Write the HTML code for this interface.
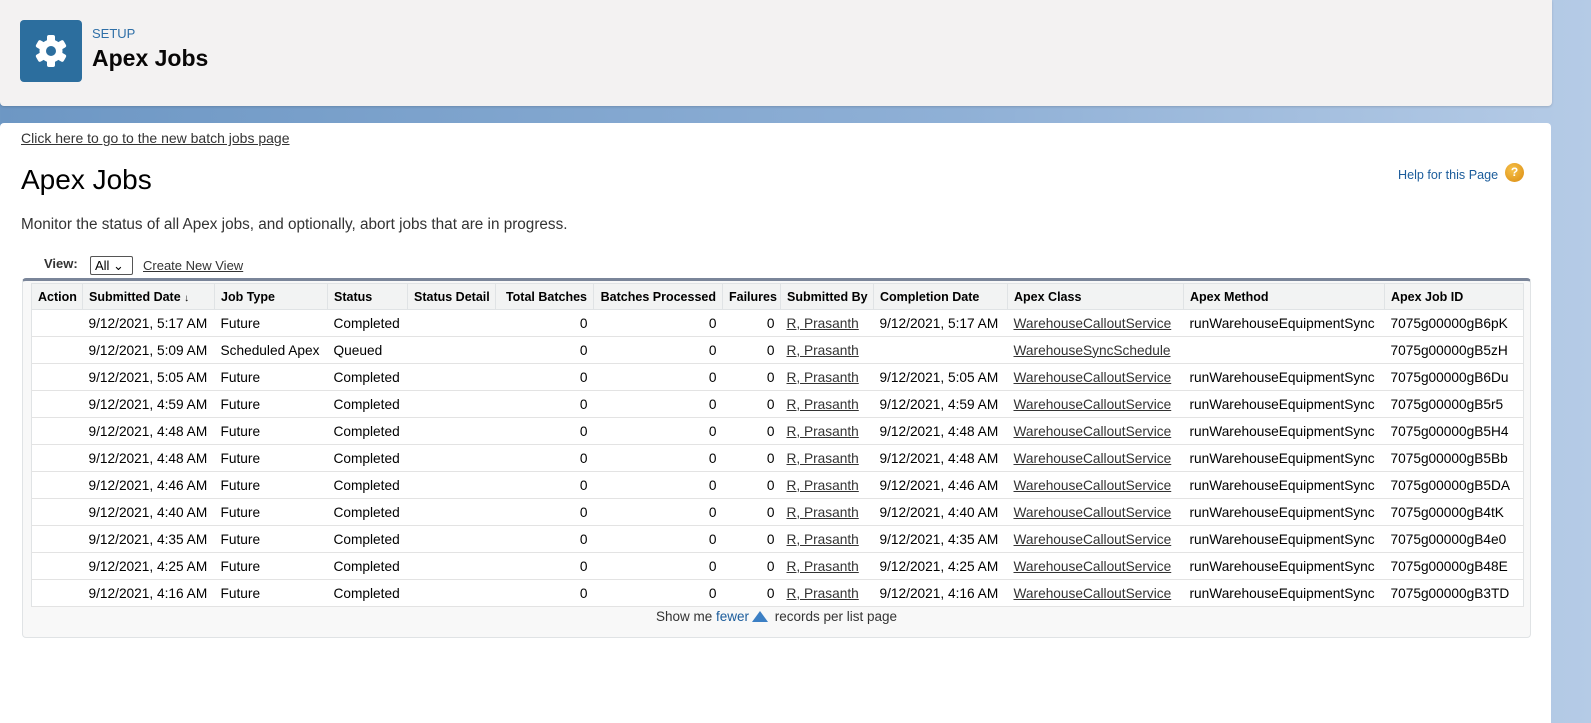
<!DOCTYPE html>
<html><head><meta charset="utf-8"><style>
*{box-sizing:border-box;margin:0;padding:0}
body{width:1591px;height:711px;overflow:hidden;font-family:"Liberation Sans",Arial,sans-serif;background:linear-gradient(90deg,#6d97c4,#8fb0d6 60%,#b5cbe6);position:relative}
.hdr{position:absolute;left:0;top:0;width:1552px;height:106px;background:#f3f2f2;border-radius:0 0 4px 4px;box-shadow:0 1px 2px rgba(0,0,0,.15)}
.icon{position:absolute;left:20px;top:20px;width:62px;height:62px;background:#2c6e9e;border-radius:4px}
.setup{position:absolute;left:92px;top:26px;font-size:13px;color:#2e6fa7}
.title{position:absolute;left:92px;top:45px;font-size:23px;font-weight:bold;color:#080707}
.main{position:absolute;left:0;top:123px;width:1551px;height:600px;background:#fff;border-radius:4px 4px 0 0}
.lnk{text-decoration:underline}
.toplink{position:absolute;left:21px;top:7px;font-size:14px;color:#333}
.h1{position:absolute;left:21px;top:41px;font-size:28px;color:#000}
.help{position:absolute;left:1398px;top:45px;font-size:12.6px;color:#1b5c9b}
.q{position:absolute;left:1505px;top:40px;width:19px;height:19px;border-radius:50%;background:radial-gradient(circle at 40% 35%,#f7c24a,#d98a10);color:#fff;font-size:12px;font-weight:bold;text-align:center;line-height:19px}
.desc{position:absolute;left:21px;top:93px;font-size:15.3px;color:#333}
.view{position:absolute;left:44px;top:133px;font-size:13px;font-weight:bold;color:#333}
.sel{position:absolute;left:90px;top:133px;width:43px;height:19px;border:1px solid #555;border-radius:2px;font-size:13px;padding-left:4px;line-height:17px;color:#000}
.cnv{position:absolute;left:143px;top:135px;font-size:13px;color:#333}
.box{position:absolute;left:22px;top:155px;width:1509px;height:360px;background:#f8f8f8;border:1px solid #e0e3e5;border-top:3px solid #7a8599;border-radius:4px}
table{position:absolute;left:8px;top:2px;border-collapse:collapse;background:#fff;table-layout:fixed;width:1492px;border:1px solid #e0e3e5}
th{font-size:12.5px;font-weight:bold;text-align:left;background:#f2f3f3;height:26px;padding:0 6px;color:#000;border-right:1px solid #e0e3e5;border-bottom:1px solid #e0e3e5;white-space:nowrap}
td{font-size:13.7px;color:#000;height:27px;padding:0 6px;border-bottom:1px solid #e3e3e3;white-space:nowrap;overflow:hidden}
td .lnk{color:#333}
.r{text-align:right}
.foot{position:absolute;left:0;top:328px;width:100%;text-align:center;font-size:13.5px;color:#333}
.foot span{color:#1b5c9b}
.tri{display:inline-block;width:0;height:0;border-left:8px solid transparent;border-right:8px solid transparent;border-bottom:11px solid #3b7fc4;vertical-align:-1px;margin:0 3px 0 3px}
</style></head><body>
<div class="hdr">
<div class="icon"><svg width="62" height="62" viewBox="0 0 62 62"><g transform="translate(31,31)" fill="#fff"><g id="t"><rect x="-4" y="-16" width="8" height="8" rx="2"/></g><use href="#t" transform="rotate(60)"/><use href="#t" transform="rotate(120)"/><use href="#t" transform="rotate(180)"/><use href="#t" transform="rotate(240)"/><use href="#t" transform="rotate(300)"/><circle r="11.5"/></g><circle cx="31" cy="31" r="5" fill="#2c6e9e"/></svg></div>
<div class="setup">SETUP</div>
<div class="title">Apex Jobs</div>
</div>
<div class="main">
<div class="toplink"><span class="lnk">Click here to go to the new batch jobs page</span></div>
<div class="h1">Apex Jobs</div>
<div class="help">Help for this Page</div><div class="q">?</div>
<div class="desc">Monitor the status of all Apex jobs, and optionally, abort jobs that are in progress.</div>
<div class="view">View:</div>
<div class="sel">All ⌄</div>
<div class="cnv"><span class="lnk">Create New View</span></div>
<div class="box">
<table>
<colgroup><col style="width:51px"><col style="width:132px"><col style="width:113px"><col style="width:80px"><col style="width:88px"><col style="width:98px"><col style="width:129px"><col style="width:58px"><col style="width:93px"><col style="width:134px"><col style="width:176px"><col style="width:201px"><col style="width:139px"></colgroup>
<tr><th>Action</th><th>Submitted Date <span style="font-weight:normal;font-size:10px">↓</span></th><th>Job Type</th><th>Status</th><th>Status Detail</th><th class="r">Total Batches</th><th class="r">Batches Processed</th><th class="r">Failures</th><th>Submitted By</th><th>Completion Date</th><th>Apex Class</th><th>Apex Method</th><th>Apex Job ID</th></tr>
<tr><td></td><td>9/12/2021, 5:17 AM</td><td>Future</td><td>Completed</td><td></td><td class="r">0</td><td class="r">0</td><td class="r">0</td><td><span class="lnk">R, Prasanth</span></td><td>9/12/2021, 5:17 AM</td><td><span class="lnk">WarehouseCalloutService</span></td><td>runWarehouseEquipmentSync</td><td>7075g00000gB6pK</td></tr>
<tr><td></td><td>9/12/2021, 5:09 AM</td><td>Scheduled Apex</td><td>Queued</td><td></td><td class="r">0</td><td class="r">0</td><td class="r">0</td><td><span class="lnk">R, Prasanth</span></td><td></td><td><span class="lnk">WarehouseSyncSchedule</span></td><td></td><td>7075g00000gB5zH</td></tr>
<tr><td></td><td>9/12/2021, 5:05 AM</td><td>Future</td><td>Completed</td><td></td><td class="r">0</td><td class="r">0</td><td class="r">0</td><td><span class="lnk">R, Prasanth</span></td><td>9/12/2021, 5:05 AM</td><td><span class="lnk">WarehouseCalloutService</span></td><td>runWarehouseEquipmentSync</td><td>7075g00000gB6Du</td></tr>
<tr><td></td><td>9/12/2021, 4:59 AM</td><td>Future</td><td>Completed</td><td></td><td class="r">0</td><td class="r">0</td><td class="r">0</td><td><span class="lnk">R, Prasanth</span></td><td>9/12/2021, 4:59 AM</td><td><span class="lnk">WarehouseCalloutService</span></td><td>runWarehouseEquipmentSync</td><td>7075g00000gB5r5</td></tr>
<tr><td></td><td>9/12/2021, 4:48 AM</td><td>Future</td><td>Completed</td><td></td><td class="r">0</td><td class="r">0</td><td class="r">0</td><td><span class="lnk">R, Prasanth</span></td><td>9/12/2021, 4:48 AM</td><td><span class="lnk">WarehouseCalloutService</span></td><td>runWarehouseEquipmentSync</td><td>7075g00000gB5H4</td></tr>
<tr><td></td><td>9/12/2021, 4:48 AM</td><td>Future</td><td>Completed</td><td></td><td class="r">0</td><td class="r">0</td><td class="r">0</td><td><span class="lnk">R, Prasanth</span></td><td>9/12/2021, 4:48 AM</td><td><span class="lnk">WarehouseCalloutService</span></td><td>runWarehouseEquipmentSync</td><td>7075g00000gB5Bb</td></tr>
<tr><td></td><td>9/12/2021, 4:46 AM</td><td>Future</td><td>Completed</td><td></td><td class="r">0</td><td class="r">0</td><td class="r">0</td><td><span class="lnk">R, Prasanth</span></td><td>9/12/2021, 4:46 AM</td><td><span class="lnk">WarehouseCalloutService</span></td><td>runWarehouseEquipmentSync</td><td>7075g00000gB5DA</td></tr>
<tr><td></td><td>9/12/2021, 4:40 AM</td><td>Future</td><td>Completed</td><td></td><td class="r">0</td><td class="r">0</td><td class="r">0</td><td><span class="lnk">R, Prasanth</span></td><td>9/12/2021, 4:40 AM</td><td><span class="lnk">WarehouseCalloutService</span></td><td>runWarehouseEquipmentSync</td><td>7075g00000gB4tK</td></tr>
<tr><td></td><td>9/12/2021, 4:35 AM</td><td>Future</td><td>Completed</td><td></td><td class="r">0</td><td class="r">0</td><td class="r">0</td><td><span class="lnk">R, Prasanth</span></td><td>9/12/2021, 4:35 AM</td><td><span class="lnk">WarehouseCalloutService</span></td><td>runWarehouseEquipmentSync</td><td>7075g00000gB4e0</td></tr>
<tr><td></td><td>9/12/2021, 4:25 AM</td><td>Future</td><td>Completed</td><td></td><td class="r">0</td><td class="r">0</td><td class="r">0</td><td><span class="lnk">R, Prasanth</span></td><td>9/12/2021, 4:25 AM</td><td><span class="lnk">WarehouseCalloutService</span></td><td>runWarehouseEquipmentSync</td><td>7075g00000gB48E</td></tr>
<tr><td></td><td>9/12/2021, 4:16 AM</td><td>Future</td><td>Completed</td><td></td><td class="r">0</td><td class="r">0</td><td class="r">0</td><td><span class="lnk">R, Prasanth</span></td><td>9/12/2021, 4:16 AM</td><td><span class="lnk">WarehouseCalloutService</span></td><td>runWarehouseEquipmentSync</td><td>7075g00000gB3TD</td></tr>
</table>
<div class="foot">Show me <span>fewer</span><i class="tri"></i> records per list page</div>
</div>
</div>
</body></html>
